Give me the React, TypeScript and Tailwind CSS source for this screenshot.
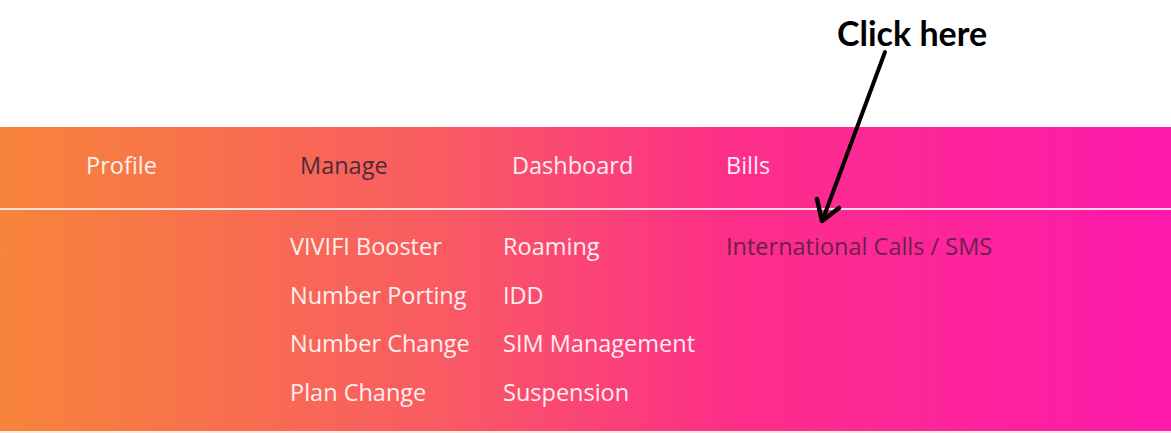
const navItems = [
    { label: 'Profile', active: false, width: 'w-[300px] pl-[86px]' },
    { label: 'Manage', active: true, width: 'w-[212px]' },
    { label: 'Dashboard', active: false, width: 'w-[214px]' },
    { label: 'Bills', active: false, width: '' },
];

const columns = [
    ['VIVIFI Booster', 'Number Porting', 'Number Change', 'Plan Change'],
    ['Roaming', 'IDD', 'SIM Management', 'Suspension'],
];

export default function App() {
    return (
        <div className="relative w-[1171px] h-[433px] bg-white overflow-hidden" style={{ fontFamily: '"Open Sans", sans-serif' }}>
            <div className="h-[127px]" />
            <div className="h-[304px] bg-[linear-gradient(90deg,#f7843a_0%,#f95a63_38%,#fc2f88_62%,#fe1aad_100%)]">
                <nav className="flex items-center h-[83px] pb-[3px] border-b-2 border-white/80 text-[23.5px]">
                    {navItems.map((item) => (
                        <div key={item.label} className={`${item.width} ${item.active ? 'text-[#4a2b3a]' : 'text-white/90'}`}>
                            {item.label}
                        </div>
                    ))}
                </nav>
                <div className="flex pl-[290px] pt-[19px] text-[23.5px]">
                    {columns.map((col, i) => (
                        <ul key={i} className={i === 0 ? 'w-[213px]' : 'w-[223px]'}>
                            {col.map((item) => (
                                <li key={item} className="h-[48.5px] text-white/90">{item}</li>
                            ))}
                        </ul>
                    ))}
                    <ul>
                        <li className="h-[48.5px] text-[#6a1f4c]">International Calls / SMS</li>
                    </ul>
                </div>
            </div>
            <div className="h-[2px] bg-[#fde9e0]" />

            {/* annotation */}
            <div className="absolute left-[837px] top-[7px] text-[34px] font-bold text-black" style={{ fontFamily: 'Lato, sans-serif' }}>
                Click here
            </div>
            <svg className="absolute left-0 top-0" width="1171" height="433" viewBox="0 0 1171 433">
                <line x1="885" y1="52" x2="823" y2="219" stroke="#000" strokeWidth="4" strokeLinecap="round" />
                <polyline points="817,199 822,221 839,208" fill="none" stroke="#000" strokeWidth="4.5" strokeLinecap="round" strokeLinejoin="round" />
            </svg>
        </div>
    );
}
